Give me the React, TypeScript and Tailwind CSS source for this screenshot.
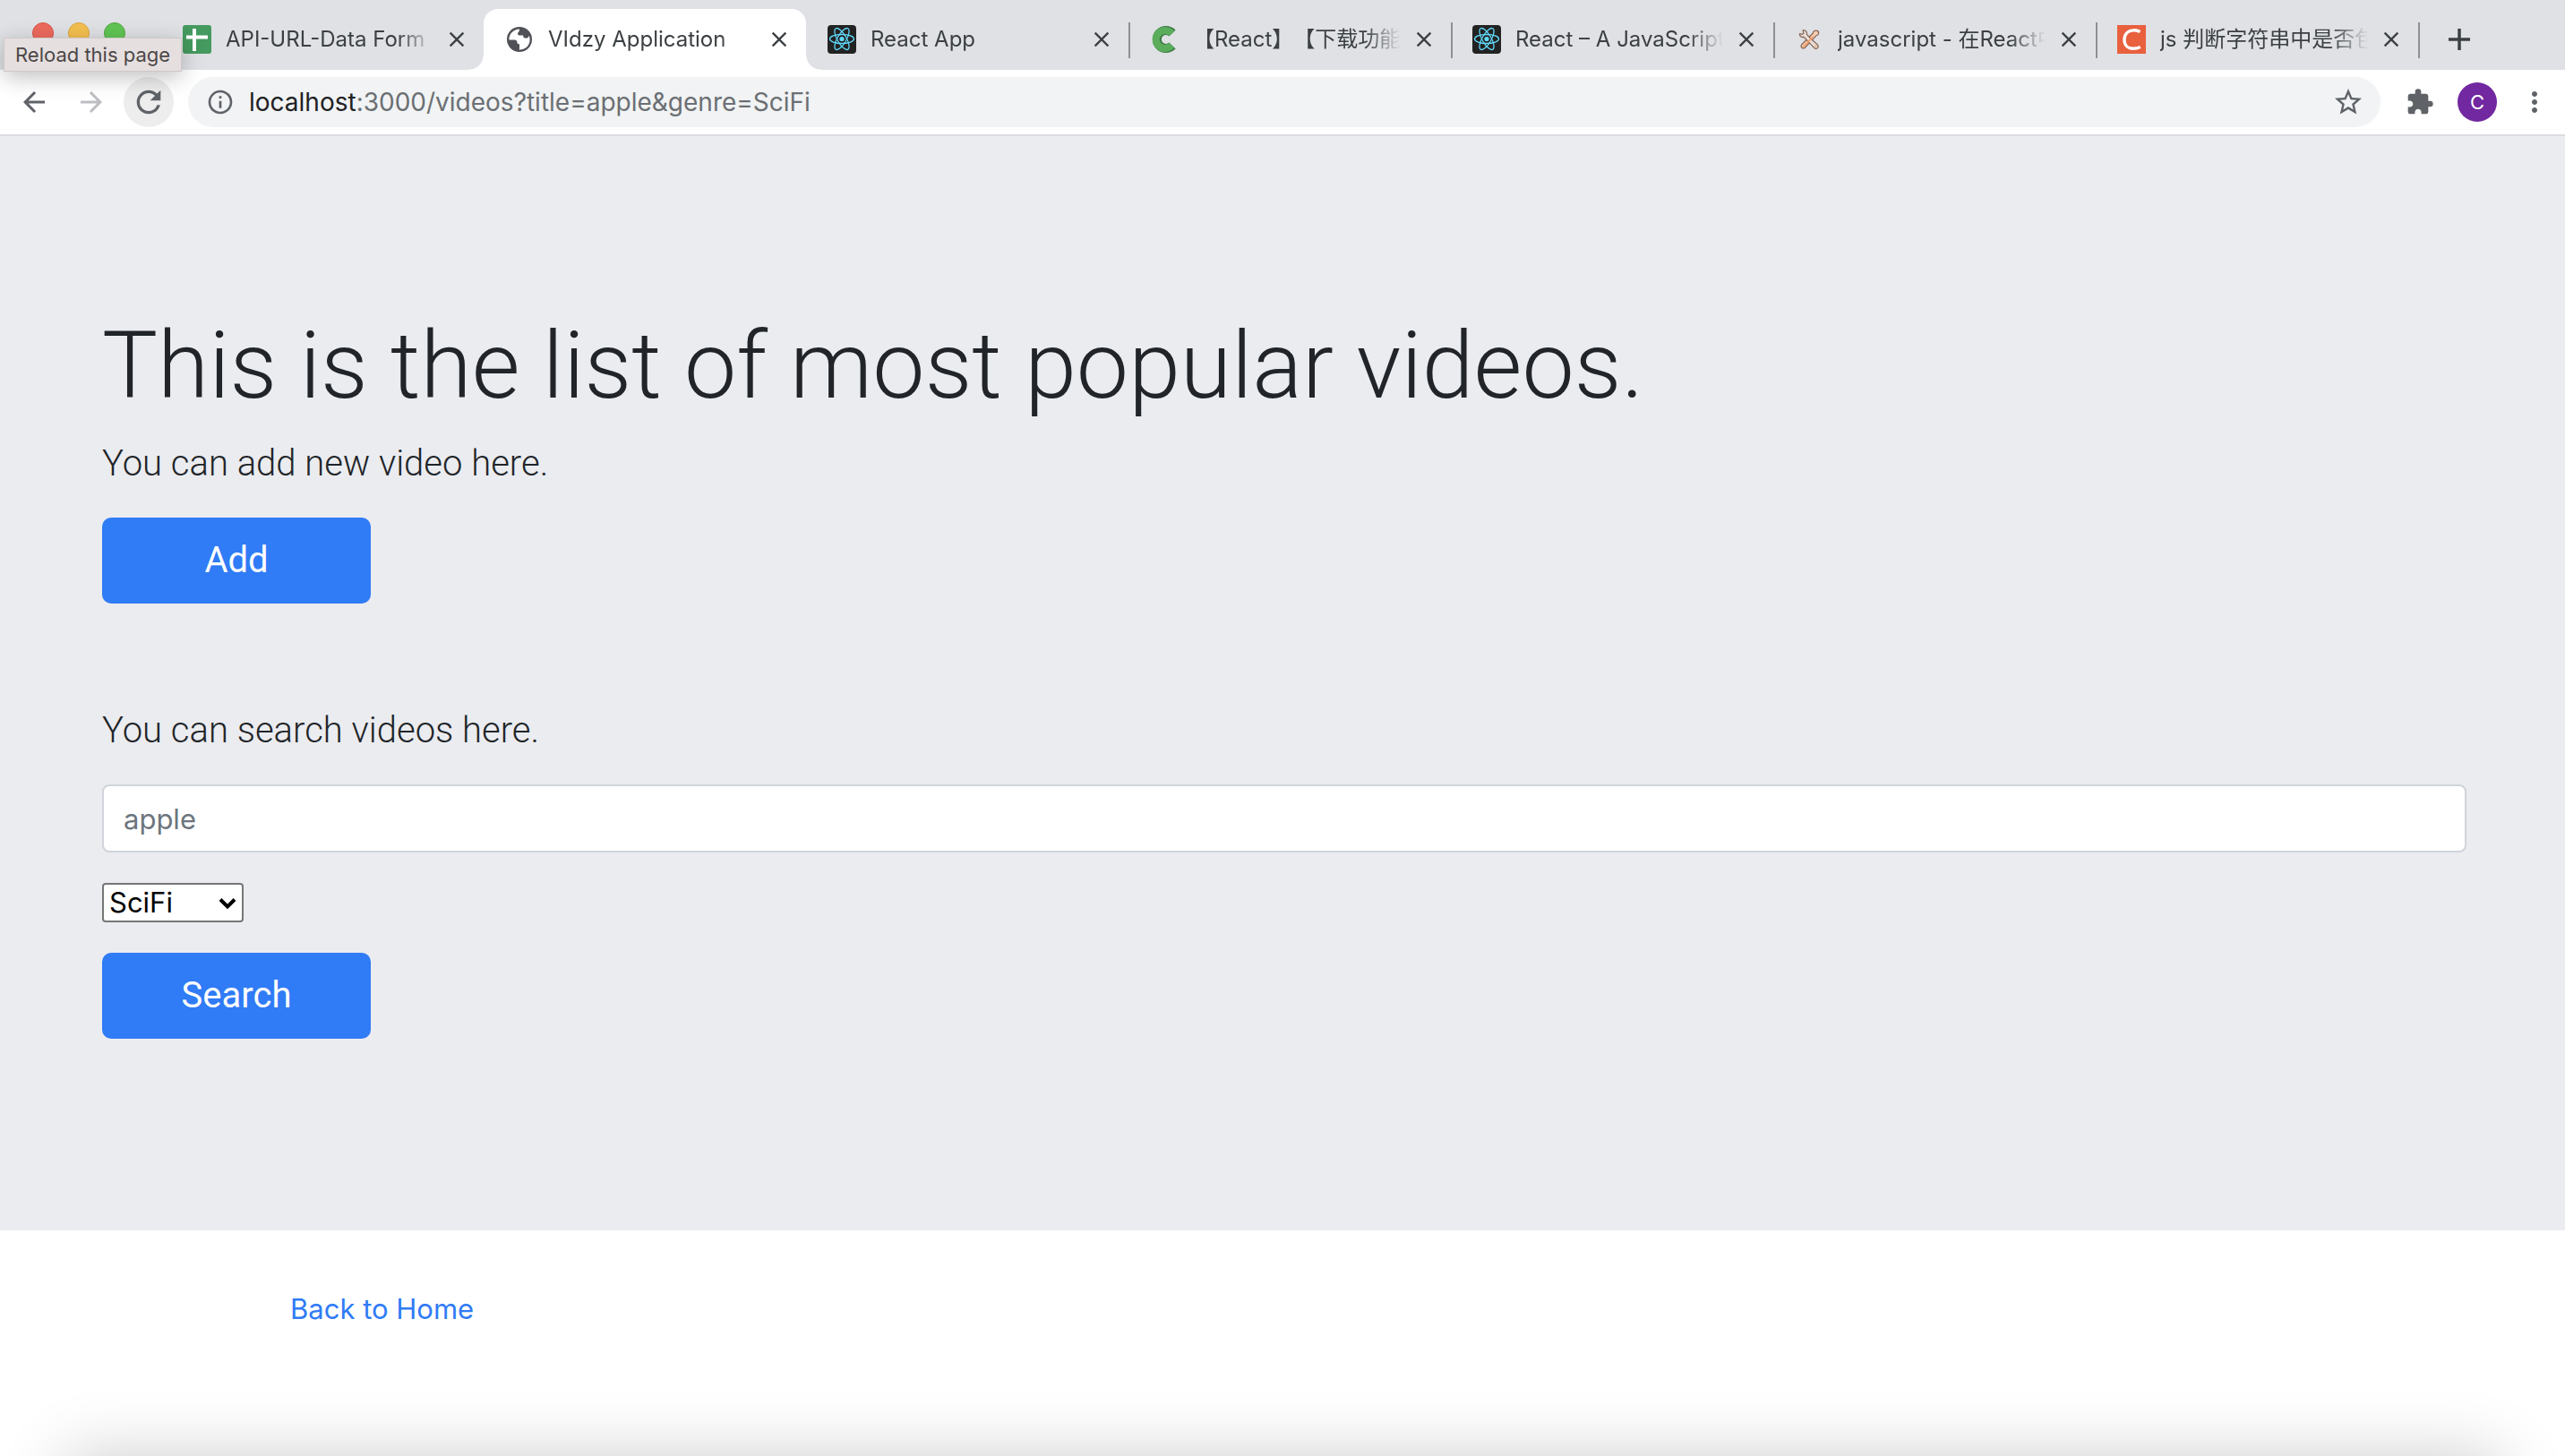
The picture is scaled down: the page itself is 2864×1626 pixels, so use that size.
import React from "react";
import {
  MdArrowBack,
  MdArrowForward,
  MdClose,
  MdExtension,
  MdInfoOutline,
  MdMoreVert,
  MdRefresh,
  MdStarBorder,
} from "react-icons/md";

function SheetsIcon() {
  return (
    <svg viewBox="0 0 32 32" className="size-8">
      <rect width="32" height="32" rx="3" fill="#459a5f" />
      <path d="M4 13.5h24M13 4v25" stroke="#fff" strokeWidth="4" />
    </svg>
  );
}

function GlobeIcon() {
  return (
    <svg viewBox="0 0 32 32" className="size-8">
      <circle cx="16" cy="16" r="14" fill="#505157" />
      <path
        d="M16 4.400C9.600 4.400 4.400 9.600 4.400 16v.6h6.200c1.800 0 2.800 1 2.800 2.600 0 1.400 1 2 2.600 2v5.200c-.6 1-1 .9-1.600.9 8 1 13.200-4.500 13.200-11.100 0-1.600-.3-3-.8-4.400-.8 2.600-2.400 3.200-4.200 2.800-2.400-.4-2.400-2-2.400-3.200h-4.400c-1.600 0-2.200-1.200-1.400-2.800.6-1.400 1.600-1.400 1.600-4.200z"
        fill="#fff"
      />
    </svg>
  );
}

function ReactIcon() {
  return (
    <svg viewBox="0 0 32 32" className="size-8">
      <rect width="32" height="32" rx="4" fill="#222" />
      <g fill="none" stroke="#61dafb" strokeWidth="1.3">
        <ellipse cx="16" cy="15.500" rx="13.500" ry="5" />
        <ellipse cx="16" cy="15.500" rx="13.500" ry="5" transform="rotate(60 16 15.500)" />
        <ellipse cx="16" cy="15.500" rx="13.500" ry="5" transform="rotate(120 16 15.500)" />
      </g>
      <circle cx="16" cy="15.500" r="2.600" fill="#61dafb" />
    </svg>
  );
}

function RoundCIcon() {
  return (
    <svg viewBox="0 0 32 32" className="size-8">
      <path d="M25 9A10 10 0 1 0 25 23" fill="none" stroke="#3d7a45" strokeWidth="10" />
      <path d="M24.300 9.500A10 10 0 1 0 24.300 22.500" fill="none" stroke="#5bad5b" strokeWidth="8" />
    </svg>
  );
}

function ToolsIcon() {
  return (
    <svg viewBox="0 0 32 32" className="size-8">
      <g strokeLinejoin="round" strokeWidth="1.300" stroke="#8a6a5a">
        <path
          d="M24.500 6.200c1.600.4 2.400 1.800 2 3.400-.3 1.200-1.200 2-2.400 2L11.800 24.800c-1.200 1.400-3 1.400-4 .4s-1-2.800.4-4L20.400 9c-.2-1.800 2-3.400 4.100-2.800z"
          fill="#f9cdb0"
        />
        <path
          d="M9.200 5.600l.6 3.400-1.600 1.400-2.800-.8c-.2 2.600 2 4.400 4.800 3.800l3.200 3.400 3.400 3.600 4.800 5c1.200 1.200 2.800 1.200 3.800.2s1-2.600-.2-3.800l-5-4.600-3.600-3.400-3.200-3.400c.6-2.800-1.400-5-4.200-4.800z"
          fill="#eadcd4"
        />
      </g>
      <path d="M20 13.500L9.500 24M23.500 23.500h.1" stroke="#f5a26c" strokeWidth="1.800" strokeLinecap="round" />
    </svg>
  );
}

function SquareCIcon() {
  return (
    <svg viewBox="0 0 32 32" className="size-8">
      <rect width="32" height="32" fill="#e9603f" />
      <path
        d="M25.500 7.500C23 6 20.500 5.500 18 5.800C11.500 6.300 8 10.800 8 16.500C8 22.500 11.800 26.200 17.500 26.200C20.500 26.200 23 25.800 25.800 24.500"
        fill="none"
        stroke="#fff"
        strokeWidth="3.400"
      />
    </svg>
  );
}

const tabs = [
  { title: "API-URL-Data Form", icon: <SheetsIcon /> },
  { title: "VIdzy Application", icon: <GlobeIcon />, active: true },
  { title: "React App", icon: <ReactIcon />, divider: true },
  { title: "【React】【下载功能】", icon: <RoundCIcon />, divider: true },
  { title: "React – A JavaScript library", icon: <ReactIcon />, divider: true },
  { title: "javascript - 在React中", icon: <ToolsIcon />, divider: true },
  { title: "js 判断字符串中是否包含", icon: <SquareCIcon />, divider: true },
];

type TabProps = { title: string; icon: React.ReactNode; active?: boolean; divider?: boolean };

function Tab({ title, icon, active, divider }: TabProps) {
  return (
    <div
      className={
        active
          ? "relative flex h-17 w-[360px] min-w-0 items-center rounded-t-2xl bg-white pl-6 pr-4"
          : "relative flex h-17 w-[360px] min-w-0 items-center pl-6 pr-4"
      }
    >
      {active && (
        <>
          <span className="absolute bottom-0 -left-4 size-4 bg-[radial-gradient(circle_at_0_0,transparent_15px,#fff_16px)]" />
          <span className="absolute bottom-0 -right-4 size-4 bg-[radial-gradient(circle_at_100%_0,transparent_15px,#fff_16px)]" />
        </>
      )}
      <span className="mr-4 shrink-0">{icon}</span>
      <span className="min-w-0 flex-1 overflow-hidden whitespace-nowrap text-[24px] leading-8 text-[#3c4043] [mask-image:linear-gradient(to_right,#000_calc(100%-40px),transparent)] [text-spacing-trim:space-all]">
        {title}
      </span>
      <button aria-label={"Close " + title} className="ml-3 shrink-0 text-[#3c4043]">
        <MdClose className="size-7" />
      </button>
      {divider && <span className="absolute -right-[2px] top-[15px] h-10 w-[2px] bg-[#8e9094]" />}
    </div>
  );
}

export default function App() {
  return (
    <div className="relative flex min-h-screen flex-col overflow-hidden bg-white font-['Inter','Noto_Sans_CJK_SC',sans-serif]">
      <header>
        <div className="flex items-end bg-[#dfe1e5] pt-[10px]">
          <div className="flex w-[180px] shrink-0 gap-4 self-start pl-9 pt-[15px]">
            <button aria-label="Close window" className="size-6 rounded-full border border-[#d85548] bg-[#ed6a5e]" />
            <button aria-label="Minimize window" className="size-6 rounded-full border border-[#dba63b] bg-[#f4bf4f]" />
            <button aria-label="Zoom window" className="size-6 rounded-full border border-[#51a73e] bg-[#61c554]" />
          </div>
          {tabs.map((tab) => (
            <Tab key={tab.title} {...tab} />
          ))}
          <button aria-label="New tab" className="mb-5 ml-8 shrink-0 text-[#3c4043]">
            <svg viewBox="0 0 28 28" className="size-7">
              <path d="M14 2v24M2 14h24" stroke="currentColor" strokeWidth="3.500" />
            </svg>
          </button>
        </div>
        <div className="flex items-center border-b-2 border-[#dadce0] py-2 pl-5 pr-4 text-[#5f6368]">
          <button aria-label="Back" className="mr-7">
            <MdArrowBack className="size-9" />
          </button>
          <button aria-label="Forward" className="mr-[18px] text-[#bcbec1]">
            <MdArrowForward className="size-9" />
          </button>
          <button
            aria-label="Reload this page"
            className="mr-4 flex size-14 items-center justify-center rounded-full bg-[#ededee]"
          >
            <MdRefresh className="size-10" />
          </button>
          <div className="flex h-14 flex-1 items-center rounded-full bg-[#f1f3f4] pl-5 pr-[18px]">
            <MdInfoOutline className="mr-4 size-8" />
            <div className="flex-1 text-[28px] leading-9 text-[#6b6f73]">
              <span className="text-[#202124]">localhost</span>:3000/videos?title=apple&amp;genre=SciFi
            </div>
            <button aria-label="Bookmark this page">
              <MdStarBorder className="size-9" />
            </button>
          </div>
          <button aria-label="Extensions" className="ml-7">
            <MdExtension className="size-8" />
          </button>
          <button
            aria-label="Profile"
            className="ml-[26px] flex size-11 items-center justify-center rounded-full bg-[#7128a0] text-[22px] text-white"
          >
            C
          </button>
          <button aria-label="Menu" className="ml-6">
            <MdMoreVert className="size-9" />
          </button>
        </div>
      </header>

      <main className="bg-[#ebecf0] pb-[214px] pl-[114px] pr-[110px] pt-[190px] font-['Roboto',sans-serif] text-[#212529]">
        <h1 className="mb-3 text-[104px] font-light leading-[134px]">This is the list of most popular videos.</h1>
        <p className="mb-[30px] text-[40px] font-light leading-[60px]">You can add new video here.</p>
        <button className="mb-28 h-24 w-[300px] rounded-[10px] bg-[#307bf6] text-[40px] text-white">Add</button>
        <form>
          <label htmlFor="title" className="mb-[30px] block text-[40px] font-light leading-[60px]">
            You can search videos here.
          </label>
          <input
            id="title"
            placeholder="apple"
            className="mb-[34px] block h-[76px] w-full rounded-lg border-2 border-[#ced4da] bg-white px-[22px] font-['Inter',sans-serif] text-[31px] placeholder:text-[#6c757d]"
          />
          <div className="relative mb-[34px] h-11 w-[158px]">
            <select
              aria-label="Genre"
              defaultValue="SciFi"
              className="h-full w-full appearance-none rounded border-2 border-[#767676] bg-white pl-[6px] font-['Inter',sans-serif] text-[31px] leading-10 text-black"
            >
              <option>SciFi</option>
              <option>Comedy</option>
            </select>
            <svg viewBox="0 0 20 14" className="pointer-events-none absolute right-2 top-4 h-3.5 w-5">
              <path d="M2 2.500l8 8 8-8" fill="none" stroke="#000" strokeWidth="4" />
            </svg>
          </div>
          <button type="button" className="h-24 w-[300px] rounded-[10px] bg-[#307bf6] text-[40px] text-white">
            Search
          </button>
        </form>
      </main>

      <footer className="pl-[324px] pt-16">
        <a href="#home" className="text-[31px] leading-12 text-[#307bf6]">
          Back to Home
        </a>
      </footer>

      <div className="absolute left-1 top-[42px] border border-[#cfc8c8] bg-[#e6dfdf] px-3 text-[22px] leading-9 text-[#4b4747] shadow-[0_6px_24px_rgba(0,0,0,0.25)]">
        Reload this page
      </div>
      <div className="pointer-events-none absolute inset-x-[72px] top-full h-60 shadow-[0_0_70px_rgba(0,0,0,0.2)]" />
    </div>
  );
}
